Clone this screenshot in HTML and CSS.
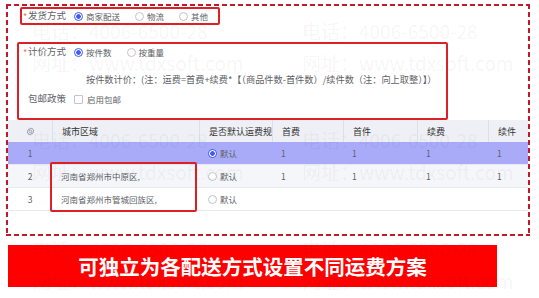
FILE: index.html
```html
<!DOCTYPE html>
<html lang="zh-CN">
<head>
    <meta charset="UTF-8">
    <title>运费模板</title>
    <link rel="stylesheet" href="styles.css">
</head>
<body>
<div class="page">
    <div class="panel">
        <div class="mark-box ship">
            <span class="req">*</span><span class="label">发货方式</span>
            <span class="radio on"></span><span class="opt">商家配送</span>
            <span class="radio"></span><span class="opt">物流</span>
            <span class="radio"></span><span class="opt">其他</span>
        </div>

        <div class="mark-box pricing">
            <div class="line">
                <span class="req">*</span><span class="label">计价方式</span>
                <span class="radio on"></span><span class="opt">按件数</span>
                <span class="radio"></span><span class="opt">按重量</span>
            </div>
            <div class="formula">按件数计价：(注：运费=首费+续费*【（商品件数-首件数）/续件数（注：向上取整）】）</div>
            <div class="line">
                <span class="req"></span><span class="label">包邮政策</span>
                <span class="check"></span><span class="opt">启用包邮</span>
            </div>
        </div>

        <div class="table">
            <div class="tr head">
                <div class="td idx">
                    <svg width="9" height="9" viewBox="0 0 16 16" fill="none" stroke="#8a8f99" stroke-width="1.4">
                        <path d="M8 1.5l1.3 1.6 2-.5.5 2 1.9.9-.7 1.9.7 1.9-1.9.9-.5 2-2-.5L8 14.5l-1.3-1.6-2 .5-.5-2-1.9-.9.7-1.9-.7-1.9 1.9-.9.5-2 2 .5z"/>
                        <circle cx="8" cy="8" r="2.3"/>
                    </svg>
                </div>
                <div class="td">城市区域</div>
                <div class="td clip">是否默认运费规则</div>
                <div class="td">首费</div>
                <div class="td">首件</div>
                <div class="td">续费</div>
                <div class="td">续件</div>
            </div>
            <div class="tr current">
                <div class="td idx">1</div>
                <div class="td"></div>
                <div class="td"><span class="radio on"></span><span class="opt">默认</span></div>
                <div class="td">1</div>
                <div class="td">1</div>
                <div class="td">1</div>
                <div class="td">1</div>
            </div>
            <div class="tr striped">
                <div class="td idx">2</div>
                <div class="td">河南省郑州市中原区,</div>
                <div class="td"><span class="radio"></span><span class="opt">默认</span></div>
                <div class="td">1</div>
                <div class="td">1</div>
                <div class="td">1</div>
                <div class="td">1</div>
            </div>
            <div class="tr">
                <div class="td idx">3</div>
                <div class="td">河南省郑州市管城回族区,</div>
                <div class="td"><span class="radio"></span><span class="opt">默认</span></div>
                <div class="td"></div>
                <div class="td"></div>
                <div class="td"></div>
                <div class="td"></div>
            </div>
            <div class="callout"></div>
        </div>
    </div>

    <div class="banner">可独立为各配送方式设置不同运费方案</div>

    <div class="watermark">
        <div class="tile"><p>电话：4006-6500-28</p><p>网址：www.tdxsoft.com</p></div>
        <div class="tile"><p>电话：4006-6500-28</p><p>网址：www.tdxsoft.com</p></div>
        <div class="tile"><p>电话：4006-6500-28</p><p>网址：www.tdxsoft.com</p></div>
        <div class="tile"><p>电话：4006-6500-28</p><p>网址：www.tdxsoft.com</p></div>
        <div class="tile"><p>电话：4006-6500-28</p><p>网址：www.tdxsoft.com</p></div>
        <div class="tile"><p>电话：4006-6500-28</p><p>网址：www.tdxsoft.com</p></div>
    </div>
</div>
</body>
</html>
```

FILE: styles.css
```css
body {
    margin: 0;
    background: #fff;
    font: 8.5px/1 "Noto Sans CJK SC", sans-serif;
    color: #606266;
}

.page {
    position: relative;
    width: 539px;
    height: 298px;
    overflow: hidden;
}

/* dashed outline, drawn with gradients to get short dashes */
.panel {
    box-sizing: border-box;
    width: 524px;
    height: 232px;
    margin: 4px 0 0 6px;
    padding: 2px;
    background:
        repeating-linear-gradient(90deg, #c2182d 0 5px, transparent 5px 8px) top left / 100% 2px no-repeat,
        repeating-linear-gradient(90deg, #c2182d 0 5px, transparent 5px 8px) bottom left / 100% 2px no-repeat,
        repeating-linear-gradient(180deg, #c2182d 0 5px, transparent 5px 8px) top left / 2px 100% no-repeat,
        repeating-linear-gradient(180deg, #c2182d 0 5px, transparent 5px 8px) top right / 2px 100% no-repeat;
}

.mark-box {
    box-sizing: border-box;
    border: 2px solid #dc2026;
    border-radius: 2px;
}

.ship {
    display: flex;
    align-items: center;
    width: 200px;
    height: 18px;
    margin: 1px 0 0 12px;
    padding-left: 1px;
    white-space: nowrap;
}

.ship > *,
.line > * {
    flex: none;
}

.pricing {
    width: 431px;
    height: 78px;
    margin: 17px 0 0 9px;
    padding-left: 4px;
}

.line {
    display: flex;
    align-items: center;
    height: 16px;
    white-space: nowrap;
}

.line + .formula {
    margin-top: 11px;
}

.formula {
    height: 16px;
    line-height: 16px;
    padding-left: 63px;
    font-size: 9.2px;
    white-space: nowrap;
}

.formula + .line {
    margin-top: 4px;
}

.req {
    width: 5px;
    color: #f56c6c;
    font-size: 9px;
}

.label {
    width: 46px;
    font-size: 9.5px;
    color: #606266;
}

.radio {
    box-sizing: border-box;
    flex: none;
    display: inline-block;
    width: 9px;
    height: 9px;
    margin-right: 3px;
    border: 1px solid #c0c4cc;
    border-radius: 50%;
    background: #fff;
}

.radio.on {
    border-color: #3f5cf2;
    background: radial-gradient(circle, #3f5cf2 0 2px, #fff 2.6px);
}

.check {
    box-sizing: border-box;
    width: 9px;
    height: 9px;
    margin-right: 4px;
    border: 1px solid #c0c4cc;
    border-radius: 1px;
}

.opt {
    margin-right: 15px;
}

.table {
    position: relative;
}

.tr {
    display: grid;
    grid-template-columns: 44px 147px 73px 71px 74px 71px 1fr;
    height: 23px;
    box-sizing: border-box;
    border-bottom: 1px solid #e8e9ee;
}

.tr.head {
    height: 22px;
    background: #eef0f6;
    color: #333;
    font-size: 9px;
    border-bottom: 0;
}

.tr.head .td + .td {
    border-left: 1px solid #dde0e8;
}

.tr.current {
    background: #a9abf8;
}

.tr.striped {
    background: #f5f6fa;
}

.td {
    display: flex;
    align-items: center;
    padding-left: 9px;
    white-space: nowrap;
    overflow: hidden;
}

.td.idx {
    justify-content: center;
    padding-left: 0;
}

.td .opt {
    margin-right: 0;
}

.callout {
    position: absolute;
    left: 42px;
    top: 42px;
    width: 147px;
    height: 50px;
    box-sizing: border-box;
    border: 2px solid #dc2026;
    border-radius: 2px;
}

.banner {
    width: 489px;
    height: 42px;
    margin: 9px 0 0 8px;
    background: #fe0000;
    color: #fff;
    font-size: 20.5px;
    font-weight: 700;
    line-height: 42px;
    text-align: center;
}

/* faint repeated watermark over the whole picture */
.watermark {
    position: absolute;
    top: 0;
    left: 0;
    width: 540px;
    display: grid;
    grid-template-columns: 270px 270px;
    grid-auto-rows: 109px;
    pointer-events: none;
}

.tile {
    padding: 15px 0 0 32px;
}

.tile p {
    margin: 0;
    height: 32px;
    line-height: 32px;
    font-size: 19px;
    color: rgba(0, 0, 0, 0.055);
    white-space: nowrap;
}
```
